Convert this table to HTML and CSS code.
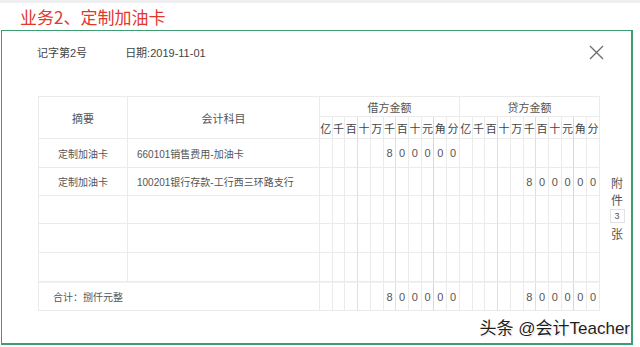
FILE: index.html
```html
<!DOCTYPE html>
<html lang="zh-CN">
<head>
<meta charset="utf-8">
<title>业务2、定制加油卡</title>
<link rel="stylesheet" href="styles.css">
</head>
<body>
<div class="topbar"></div>
<div class="title">业务2、定制加油卡</div>
<div class="frame">
  <div class="vhead">
    <span class="vno">记字第2号</span>
    <span class="vdate">日期:2019-11-01</span>
    <svg class="close" width="15" height="15" viewBox="0 0 15 15"><path d="M1 1 L14 14 M14 1 L1 14" stroke="#6f6f6f" stroke-width="1.4" fill="none"/></svg>
  </div>
  <div class="vbody">
    <table class="grid">
      <colgroup><col class="w1"><col class="w2"></colgroup>
      <tr class="h1">
        <th rowspan="2" class="sum">摘要</th>
        <th rowspan="2" class="sum">会计科目</th>
        <th colspan="11">借方金额</th>
        <th colspan="11">贷方金额</th>
      </tr>
      <tr class="h2">
        <td>亿</td><td>千</td><td class="b">百</td><td>十</td><td>万</td><td class="b">千</td><td>百</td><td>十</td><td class="r">元</td><td>角</td><td>分</td>
        <td>亿</td><td>千</td><td class="b">百</td><td>十</td><td>万</td><td class="b">千</td><td>百</td><td>十</td><td class="r">元</td><td>角</td><td>分</td>
      </tr>
      <tr class="row ra">
        <td class="cz">定制加油卡</td><td class="ck">660101销售费用-加油卡</td>
        <td></td><td></td><td class="b"></td><td></td><td></td><td class="b">8</td><td>0</td><td>0</td><td class="r">0</td><td>0</td><td>0</td>
        <td></td><td></td><td class="b"></td><td></td><td></td><td class="b"></td><td></td><td></td><td class="r"></td><td></td><td></td>
      </tr>
      <tr class="row rb">
        <td class="cz">定制加油卡</td><td class="ck">100201银行存款-工行西三环路支行</td>
        <td></td><td></td><td class="b"></td><td></td><td></td><td class="b"></td><td></td><td></td><td class="r"></td><td></td><td></td>
        <td></td><td></td><td class="b"></td><td></td><td></td><td class="b">8</td><td>0</td><td>0</td><td class="r">0</td><td>0</td><td>0</td>
      </tr>
      <tr class="row rb">
        <td class="cz"></td><td class="ck"></td>
        <td></td><td></td><td class="b"></td><td></td><td></td><td class="b"></td><td></td><td></td><td class="r"></td><td></td><td></td>
        <td></td><td></td><td class="b"></td><td></td><td></td><td class="b"></td><td></td><td></td><td class="r"></td><td></td><td></td>
      </tr>
      <tr class="row ra">
        <td class="cz"></td><td class="ck"></td>
        <td></td><td></td><td class="b"></td><td></td><td></td><td class="b"></td><td></td><td></td><td class="r"></td><td></td><td></td>
        <td></td><td></td><td class="b"></td><td></td><td></td><td class="b"></td><td></td><td></td><td class="r"></td><td></td><td></td>
      </tr>
      <tr class="row ra">
        <td class="cz"></td><td class="ck"></td>
        <td></td><td></td><td class="b"></td><td></td><td></td><td class="b"></td><td></td><td></td><td class="r"></td><td></td><td></td>
        <td></td><td></td><td class="b"></td><td></td><td></td><td class="b"></td><td></td><td></td><td class="r"></td><td></td><td></td>
      </tr>
      <tr class="row total">
        <td colspan="2" class="ctot">合计：捌仟元整</td>
        <td></td><td></td><td class="b"></td><td></td><td></td><td class="b">8</td><td>0</td><td>0</td><td class="r">0</td><td>0</td><td>0</td>
        <td></td><td></td><td class="b"></td><td></td><td></td><td class="b">8</td><td>0</td><td>0</td><td class="r">0</td><td>0</td><td>0</td>
      </tr>
    </table>
    <div class="attach">
      <span>附</span>
      <span>件</span>
      <span class="cnt">3</span>
      <span>张</span>
    </div>
  </div>
</div>
<div class="mark">头条 @会计Teacher</div>
</body>
</html>
```

FILE: styles.css
```css
html, body {
  margin: 0;
  padding: 0;
  background: #ffffff;
}
body {
  width: 640px;
  height: 347px;
  overflow: hidden;
  position: relative;
  font-family: "Liberation Sans", "Noto Sans CJK SC", sans-serif;
  color: #555;
}
.topbar {
  height: 3px;
  background: #efeff1;
}
.title {
  height: 27px;
  box-sizing: border-box;
  padding-left: 20px;
  padding-top: 4px;
  font-family: "Noto Sans CJK SC", sans-serif;
  font-size: 17px;
  line-height: 20px;
  color: #e2382e;
}
.frame {
  box-sizing: border-box;
  margin-left: 1px;
  width: 632px;
  height: 315px;
  border: 1px solid #3f9c72;
  border-right-width: 2px;
  border-bottom-width: 2px;
}
.vhead {
  display: flex;
  align-items: center;
  height: 42px;
  padding-left: 35px;
  padding-right: 27px;
  font-size: 11px;
  color: #444;
}
.vdate {
  margin-left: 38px;
}
.close {
  margin-left: auto;
}
.vbody {
  display: flex;
  margin-top: 23px;
  padding-left: 36px;
}
.grid {
  width: 562px;
  table-layout: fixed;
  border-collapse: separate;
  border-spacing: 0;
  border-top: 1px solid #ebebeb;
  border-left: 1px solid #ebebeb;
  font-size: 11px;
  color: #555;
}
.w1 { width: 89px; }
.w2 { width: 192px; }
.grid th, .grid td {
  border-right: 1px solid #ebebeb;
  border-bottom: 1px solid #ebebeb;
  padding: 0;
  text-align: center;
  font-weight: normal;
  overflow: hidden;
  white-space: nowrap;
}
.grid td.b { border-right-color: #cfe3f1; }
.grid td.r { border-right-color: #f3cccc; }
.h1 th { height: 19px; }
.grid th.sum { font-size: 11px; }
.h2 td { height: 21px; font-size: 11px; color: #444; }
.row.ra td { height: 28px; }
.row.rb td { height: 27px; }
.row.total td { height: 27px; }
.row.total td { border-top: 1px solid #f2f2f2; }
.grid td.cz { text-align: center; font-size: 10px; }
.grid td.ck { text-align: left; padding-left: 9px; font-size: 10px; }
.grid td.ctot { text-align: left; padding-left: 14px; font-size: 10px; border-right-color: #ebebeb; }
.row td { color: #555; }
.attach {
  display: flex;
  flex-direction: column;
  align-items: center;
  width: 20px;
  margin-left: 7px;
  padding-top: 78px;
  font-family: "Noto Sans CJK SC", sans-serif;
  font-size: 12px;
  line-height: 17px;
  color: #555;
}
.attach .cnt {
  box-sizing: border-box;
  width: 15px;
  height: 14px;
  margin: 1px 0 2px;
  border: 1px solid #e2e2e2;
  font-family: "Liberation Sans", sans-serif;
  font-size: 9px;
  line-height: 12px;
  text-align: center;
}
.mark {
  position: absolute;
  right: 10px;
  bottom: 8px;
  font-family: "Liberation Sans", "Noto Sans CJK SC", sans-serif;
  font-size: 17px;
  line-height: 20px;
  color: #1e1e1e;
  text-shadow: 1px 0 0 #fff, -1px 0 0 #fff, 0 1px 0 #fff, 0 -1px 0 #fff, 1px 1px 1px #ccc;
}
```
